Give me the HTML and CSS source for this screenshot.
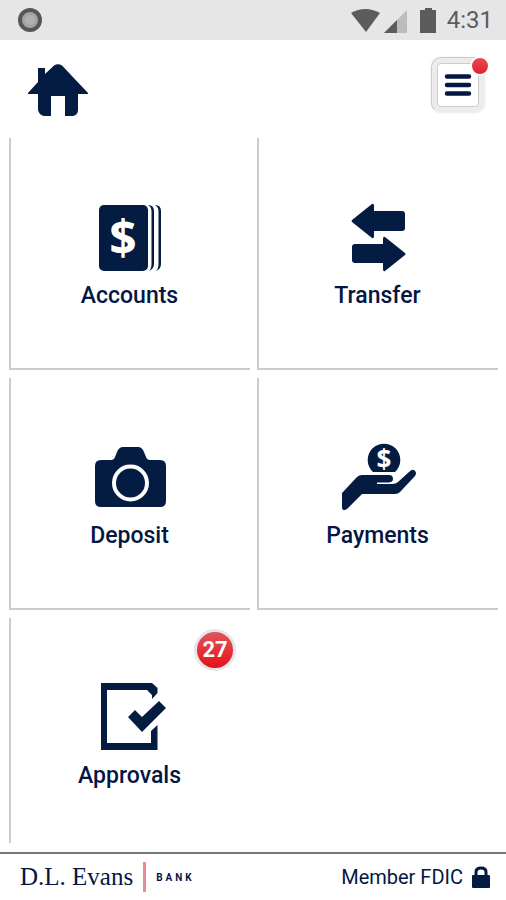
FILE: index.html
```html
<!DOCTYPE html>
<html lang="en">
<head>
<meta charset="utf-8">
<meta name="viewport" content="width=device-width, initial-scale=1">
<title>D.L. Evans Bank</title>
<link rel="stylesheet" href="styles.css">
</head>
<body>
<div class="status">
  <svg class="status-dot" width="24" height="24" viewBox="0 0 24 24" aria-hidden="true">
    <circle cx="12" cy="12" r="10" fill="#a3a3a3" stroke="#565656" stroke-width="4"/>
    <circle cx="12" cy="12" r="5" fill="#b0b0b0"/>
  </svg>
  <div class="status-right">
    <svg width="88" height="26" viewBox="0 0 88 26" aria-hidden="true">
      <path d="M1 6Q15-2 30 6L16 25Z" fill="#5c5c5c"/>
      <path d="M57 3V26H34Z" fill="#bcbcbc"/>
      <path d="M47 13V26H34Z" fill="#5c5c5c"/>
      <path d="M75 1H82V3H86V26H70V3H75Z" fill="#5c5c5c"/>
    </svg>
    <time class="clock">4:31</time>
  </div>
</div>
<header class="header">
  <a class="home" href="#" aria-label="Home">
    <svg width="60" height="52" viewBox="0 0 60 52" aria-hidden="true">
      <path d="M0 29L10 18V4H17V10L26 1.500Q30-1 34 1.500L60 29V30H50V46Q50 51 45 52H37V32H23V52H16Q11 51 10 46V30H0Z"/>
    </svg>
  </a>
  <button class="menu" type="button" aria-label="Menu">
    <span class="menu-face">
      <svg width="28" height="24" viewBox="0 0 28 24" aria-hidden="true">
        <path d="M3 3.500H25M3 12H25M3 20.500H25" fill="none" stroke="#041642" stroke-width="4.500" stroke-linecap="round"/>
      </svg>
    </span>
    <span class="menu-alert"></span>
  </button>
</header>
<main class="tiles">
  <a class="tile" href="#">
    <svg class="icon" viewBox="0 0 80 72" aria-hidden="true">
      <rect x="9" y="3" width="49" height="66" rx="5"/>
      <path d="M58 3Q64 3 64 9V62Q64 67 59 69Q61.500 67 61.500 62V9Q61.500 5 58 3ZM65 3Q71 3 71 9V62Q71 67 66 69Q68.500 67 68.500 62V9Q68.500 5 65 3Z"/>
      <text class="dollar dollar-large" x="33" y="53">$</text>
    </svg>
    <span class="label">Accounts</span>
  </a>
  <a class="tile" href="#">
    <svg class="icon" viewBox="0 0 80 72" aria-hidden="true">
      <path d="M14 18L34 2Q36 1 36 4V9H64Q67 9 67 12V26Q67 29 64 29H36V34Q36 37 34 36L14 20Q13 19 14 18Z"/>
      <path d="M67 51L47 35Q45 34 45 37V42H17Q14 42 14 45V58Q14 61 17 61H45V67Q45 70 47 69L67 53Q68 52 67 51Z"/>
    </svg>
    <span class="label">Transfer</span>
  </a>
  <a class="tile" href="#">
    <svg class="icon" viewBox="0 0 80 72" aria-hidden="true">
      <path d="M11 18H21Q24 18 25 15L27 10Q29 5 33 5H48Q52 5 54 10L56 15Q57 18 60 18H70Q76 18 76 24V59Q76 65 70 65H11Q5 65 5 59V24Q5 18 11 18Z"/>
      <circle cx="40.500" cy="41" r="16.500" fill="none" stroke="#fff" stroke-width="4"/>
    </svg>
    <span class="label">Deposit</span>
  </a>
  <a class="tile" href="#">
    <svg class="icon" viewBox="0 0 80 72" aria-hidden="true">
      <path d="M35 30A16.300 16.300 0 1 1 57 30Z"/>
      <text class="dollar dollar-small" x="46" y="27">$</text>
      <path d="M4 51L19 35Q21 33 24 33H51Q55 33 55 37Q55 40 51 40.500H39V42H54Q58 42 60 40L71 30Q75 26 77 29Q79 31 77 34L62 50Q60 52 57 52H24L9 67Q4 70 4 65Z"/>
      <path d="M39 41.500H54" fill="none" stroke="#fff"/>
    </svg>
    <span class="label">Payments</span>
  </a>
  <a class="tile" href="#">
    <svg class="icon" viewBox="0 0 80 72" aria-hidden="true">
      <path d="M11 1H62L67.500 6V11L62 17V13L57 8H17V61H61V49L67.500 43V68H11Z"/>
      <path d="M38 35L45 28L52 35L69 19L76 26L52 50Z"/>
    </svg>
    <span class="label">Approvals</span>
    <span class="badge">27</span>
  </a>
</main>
<footer class="footer">
  <div class="brand">
    <span class="brand-name">D.L. Evans</span>
    <span class="brand-kind">BANK</span>
  </div>
  <div class="fdic">
    <span>Member FDIC</span>
    <svg width="18" height="22" viewBox="0 0 18 22" aria-hidden="true">
      <path d="M4 11V6Q4 2 9 2Q14 2 14 6V11" fill="none" stroke="#041642" stroke-width="3"/>
      <rect x="0" y="9" width="18" height="13" rx="1"/>
    </svg>
  </div>
</footer>
</body>
</html>
```

FILE: styles.css
```css
* {
  box-sizing: border-box;
}

body {
  display: flex;
  flex-direction: column;
  height: 100vh;
  margin: 0;
  background: #fff;
  color: #041642;
  font-family: Roboto, "Liberation Sans", sans-serif;
}

a {
  color: inherit;
  text-decoration: none;
}

svg {
  display: block;
  fill: #041c42;
}

.status {
  display: flex;
  flex: none;
  align-items: center;
  justify-content: space-between;
  height: 40px;
  padding: 0 13px 0 18px;
  background: #e6e6e6;
}

.status-right {
  display: flex;
  align-items: center;
  gap: 9px;
}

.clock {
  color: #5c5c5c;
  font-size: 24px;
  line-height: 40px;
}

.header {
  display: flex;
  flex: none;
  align-items: flex-start;
  justify-content: space-between;
  height: 98px;
  padding: 17px 21px 0 28px;
}

.home {
  padding-top: 7px;
}

.menu {
  position: relative;
  padding: 5px;
  border: 1px solid #ccc;
  border-right-color: #eee;
  border-bottom-color: #eee;
  border-radius: 10px;
  background: #ececec;
  box-shadow: 0 0 2px #e6e6e6;
}

.menu-face {
  display: flex;
  align-items: center;
  justify-content: center;
  width: 42px;
  height: 44px;
  border: 1px solid #ccc;
  border-radius: 4px;
  background: #fff;
}

.menu-alert {
  position: absolute;
  top: -2px;
  right: -6px;
  width: 20px;
  height: 20px;
  border: 2px solid #fff;
  border-radius: 50%;
  background: linear-gradient(#e84a55, #e4202e);
}

.tiles {
  display: grid;
  flex: 1;
  grid-template-columns: 1fr 1fr;
  grid-auto-rows: 232px;
  gap: 8px 7px;
  min-height: 0;
  margin-bottom: 9px;
  padding: 0 8px 0 9px;
  overflow: hidden;
}

.tile {
  position: relative;
  display: flex;
  flex-direction: column;
  align-items: center;
  gap: 10px;
  padding: 64px 2px 0 0;
  border-bottom: 2px solid #ccc;
  border-left: 2px solid #ccc;
}

.icon {
  width: 80px;
  height: 72px;
}

.dollar {
  fill: #fff;
  font-family: "Open Sans", sans-serif;
  font-weight: 700;
  text-anchor: middle;
}

.dollar-large {
  font-size: 48px;
}

.dollar-small {
  font-size: 26px;
}

.label {
  font-size: 23px;
  font-weight: 500;
  line-height: 24px;
}

.badge {
  position: absolute;
  top: 11px;
  right: 14px;
  width: 42px;
  height: 42px;
  border: 3px solid #e6e6e6;
  border-radius: 50%;
  background: linear-gradient(#e2555c, #e5101a);
  color: #fff;
  font-size: 22px;
  font-weight: 700;
  line-height: 36px;
  text-align: center;
}

.footer {
  display: flex;
  flex: none;
  align-items: center;
  justify-content: space-between;
  height: 48px;
  padding: 0 16px 0 20px;
  border-top: 2px solid #777;
}

.brand {
  display: flex;
  align-items: center;
}

.brand-name {
  padding-right: 10px;
  border-right: 3px solid #e98a96;
  font-family: "Liberation Serif", serif;
  font-size: 25px;
  line-height: 30px;
}

.brand-kind {
  padding-left: 10px;
  font-size: 10px;
  font-weight: 700;
  letter-spacing: 3px;
}

.fdic {
  display: flex;
  align-items: center;
  gap: 9px;
  font-size: 20px;
  line-height: 24px;
}
```
